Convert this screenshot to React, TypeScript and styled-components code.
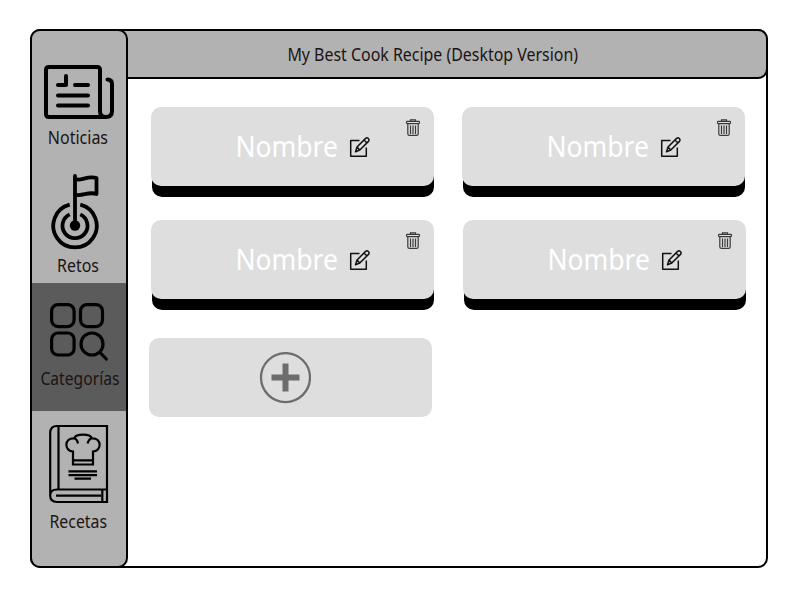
import React from 'react';
import styled, { createGlobalStyle } from 'styled-components';

const GlobalStyle = createGlobalStyle`
  * { box-sizing: border-box; }
  body { margin: 0; background: #fff; font-family: "Noto Sans", "Open Sans", sans-serif; }
`;

const Page = styled.div`
  width: 800px;
  height: 600px;
  padding: 29px 32px 32px 30px;
  overflow: hidden;
`;

const Frame = styled.div`
  display: flex;
  width: 738px;
  height: 539px;
  border: 2px solid #000;
  border-radius: 10px;
`;

const Sidebar = styled.nav`
  position: relative;
  z-index: 1;
  flex: none;
  display: flex;
  flex-direction: column;
  width: 98px;
  margin: -2px 0 -2px -2px;
  background: #b2b2b2;
  border: 2px solid #000;
  border-radius: 10px;
`;

const NavItem = styled.a<{ $height: number; $top: number; $active?: boolean; $iconShift?: number }>`
  display: flex;
  flex-direction: column;
  align-items: center;
  height: ${p => p.$height}px;
  padding-top: ${p => p.$top}px;
  background: ${p => (p.$active ? '#5b5b5b' : 'transparent')};
  svg {
    display: block;
    flex: none;
    transform: translateX(${p => p.$iconShift ?? 0}px);
  }
`;

const NavLabel = styled.span<{ $gap: number; $scale: number; $shift?: number }>`
  margin-top: ${p => p.$gap}px;
  font-size: 17.5px;
  line-height: 24px;
  color: #1c1412;
  white-space: nowrap;
  transform: translateX(${p => p.$shift ?? 0}px) scaleX(${p => p.$scale});
`;

const Main = styled.main`
  flex: 1;
  min-width: 0;
`;

const Header = styled.header`
  display: flex;
  align-items: center;
  justify-content: center;
  height: 50px;
  margin: -2px -2px 0 -12px;
  padding: 1px 19px 0 0;
  background: #b2b2b2;
  border: 2px solid #000;
  border-radius: 0 10px 10px 0;
`;

const Title = styled.h1`
  margin: 0;
  font-size: 17.5px;
  font-weight: 400;
  line-height: 25px;
  color: #1c1412;
  white-space: nowrap;
  transform: scaleX(0.91);
`;

const Grid = styled.section`
  display: grid;
  grid-template-columns: 283px 283px;
  grid-auto-rows: 79px;
  gap: 34px 28px;
  padding: 28px 0 0 23px;
`;

const Card = styled.article<{ $nudge?: number }>`
  position: relative;
  z-index: 0;
  display: flex;
  width: 283px;
  margin-left: ${p => p.$nudge ?? 0}px;
  padding-left: 85px;
  border-radius: 10px;
  &::before {
    content: '';
    position: absolute;
    z-index: -2;
    inset: 40px 0 -11px 1px;
    background: #000;
    border-radius: 10px;
  }
  &::after {
    content: '';
    position: absolute;
    z-index: -1;
    inset: 0;
    background: #dedede;
    border-radius: 10px;
  }
`;

const Name = styled.h2`
  width: 103px;
  margin: 19px 0 0;
  font-size: 28.5px;
  font-weight: 400;
  line-height: 40px;
  color: #fff;
  transform: translateX(-0.5px) scaleX(0.928);
  transform-origin: left;
`;

const IconButton = styled.button<{ $left: number; $top: number }>`
  align-self: flex-start;
  flex: none;
  margin: ${p => p.$top}px 0 0 ${p => p.$left}px;
  padding: 0;
  border: 0;
  background: none;
  svg { display: block; }
`;

const AddCard = styled.button`
  display: flex;
  align-items: center;
  width: 283px;
  height: 79px;
  margin: 5px 0 0 -2px;
  padding: 0 0 0 110px;
  border: 0;
  background: #dedede;
  border-radius: 10px;
`;

const NewsIcon = () => (
  <svg width="72" height="56" viewBox="43 64 72 56" fill="none" stroke="#000" strokeWidth="4" strokeLinecap="round" strokeLinejoin="round">
    <path d="M105.5 117H49Q46 117 46 114V70Q46 67 49 67H97Q100 67 100 70V111.500Q100 117 106 117Q112 117 112 111V84Q112 79.500 107.500 79.500" />
    <path d="M58 85H66V76M75 85H88M58 95.500H88M58 105.500H88" />
  </svg>
);

const GoalIcon = () => (
  <svg width="50" height="76" viewBox="50 174 50 76" fill="none" stroke="#000" strokeWidth="3.8" strokeLinejoin="round">
    <path d="M75 225V176" strokeLinecap="round" />
    <path d="M75 179C81 182 87 175 96.500 178V194C88 191 82 197 75 194.500" strokeLinecap="round" />
    <circle cx="75" cy="225.500" r="5.200" fill="#000" stroke="none" />
    <path d="M69.700 204.700A21.700 21.700 0 1 0 80.300 204.700" />
    <path d="M69.700 214.400A12.500 12.500 0 1 0 80.300 214.400" />
  </svg>
);

const CategoriesIcon = () => (
  <svg width="60" height="60" viewBox="49 302 60 60" fill="none" stroke="#000" strokeWidth="3.2" strokeLinecap="round">
    <rect x="51.600" y="304.600" width="22.500" height="22" rx="6.500" />
    <rect x="80.500" y="304.600" width="22" height="22" rx="6.500" />
    <rect x="51.600" y="333" width="22.500" height="22" rx="6.500" />
    <circle cx="92" cy="344" r="11" />
    <path d="M100 352.500L106.300 359" />
  </svg>
);

const BookIcon = () => (
  <svg width="60" height="80" viewBox="49 424 60 80" fill="none" stroke="#000" strokeWidth="2.2">
    <path d="M107 489.500V426H57Q50.200 426 50.200 433V495.500Q50.200 502 57 502H107V489.500H57Q50.200 489.500 50.200 495.500M58.500 426V489.500M56 495.700H101M102.300 489.500V502" />
    <path d="M73 464.500V451.500C64 451 64 438 74 438.300C76 433.300 90 433.300 92 438.300C102 438 102 451 93 451.500V464.500ZM73 460.300H93M74 438.300Q77 438.500 78 443.500M92 438.300Q89 438.500 87.500 443.500" />
    <path d="M68.500 471.300H97M68.500 475.100H97M74.500 478.700H91" />
  </svg>
);

const EditIcon = () => (
  <svg width="22" height="22" viewBox="349 136 22 22" fill="none" stroke="#111" strokeWidth="1.500" strokeLinejoin="round">
    <path d="M359.500 140.500H350.700V156.200H366.300V147.500" />
    <path d="M355.500 151.700L357 147L365.600 138.400Q367 137.200 368.400 138.500Q369.700 140 368.500 141.400L359.800 150ZM364 140L367 143M357 147L359.800 150" />
  </svg>
);

const TrashIcon = () => (
  <svg width="16" height="18" viewBox="405 117.6 16 18" fill="none" stroke="#3a3a3a" strokeWidth="1.200">
    <rect x="406.500" y="121" width="13" height="2.200" rx="0.800" />
    <path d="M410.500 121V119.400H415.500V121M407.800 123.500V133.300Q407.800 135 409.500 135H416.500Q418.200 135 418.200 133.300V123.500M410.500 125V133.500M413 125V133.500M415.500 125V133.500" />
  </svg>
);

const PlusIcon = () => (
  <svg width="52" height="52" viewBox="0 0.4 52 52" fill="none" stroke="#6d6d6d">
    <circle cx="26.500" cy="26" r="24.500" strokeWidth="2.300" />
    <path d="M12.500 26H40.500M26.500 12V40" strokeWidth="6" />
  </svg>
);

const CategoryCard = ({ name, nudge }: { name: string; nudge?: number }) => (
  <Card $nudge={nudge}>
    <Name>{name}</Name>
    <IconButton $left={10} $top={29} aria-label="Editar"><EditIcon /></IconButton>
    <IconButton $left={34} $top={11} aria-label="Eliminar"><TrashIcon /></IconButton>
  </Card>
);

export default function App() {
  return (
    <>
      <GlobalStyle />
      <Page>
        <Frame>
          <Sidebar>
            <NavItem $height={124} $top={33}>
              <NewsIcon />
              <NavLabel $gap={5} $scale={0.915} $shift={-1}>Noticias</NavLabel>
            </NavItem>
            <NavItem $height={128} $top={19} $iconShift={-4}>
              <GoalIcon />
              <NavLabel $gap={3} $scale={0.91} $shift={-1}>Retos</NavLabel>
            </NavItem>
            <NavItem $height={128} $top={19} $active>
              <CategoriesIcon />
              <NavLabel $gap={4} $scale={0.895} $shift={0.8}>Categorías</NavLabel>
            </NavItem>
            <NavItem $height={153} $top={13}>
              <BookIcon />
              <NavLabel $gap={5} $scale={0.905} $shift={-0.5}>Recetas</NavLabel>
            </NavItem>
          </Sidebar>
          <Main>
            <Header>
              <Title>My Best Cook Recipe (Desktop Version)</Title>
            </Header>
            <Grid>
              <CategoryCard name="Nombre" />
              <CategoryCard name="Nombre" />
              <CategoryCard name="Nombre" />
              <CategoryCard name="Nombre" nudge={1} />
              <AddCard aria-label="Añadir"><PlusIcon /></AddCard>
            </Grid>
          </Main>
        </Frame>
      </Page>
    </>
  );
}
